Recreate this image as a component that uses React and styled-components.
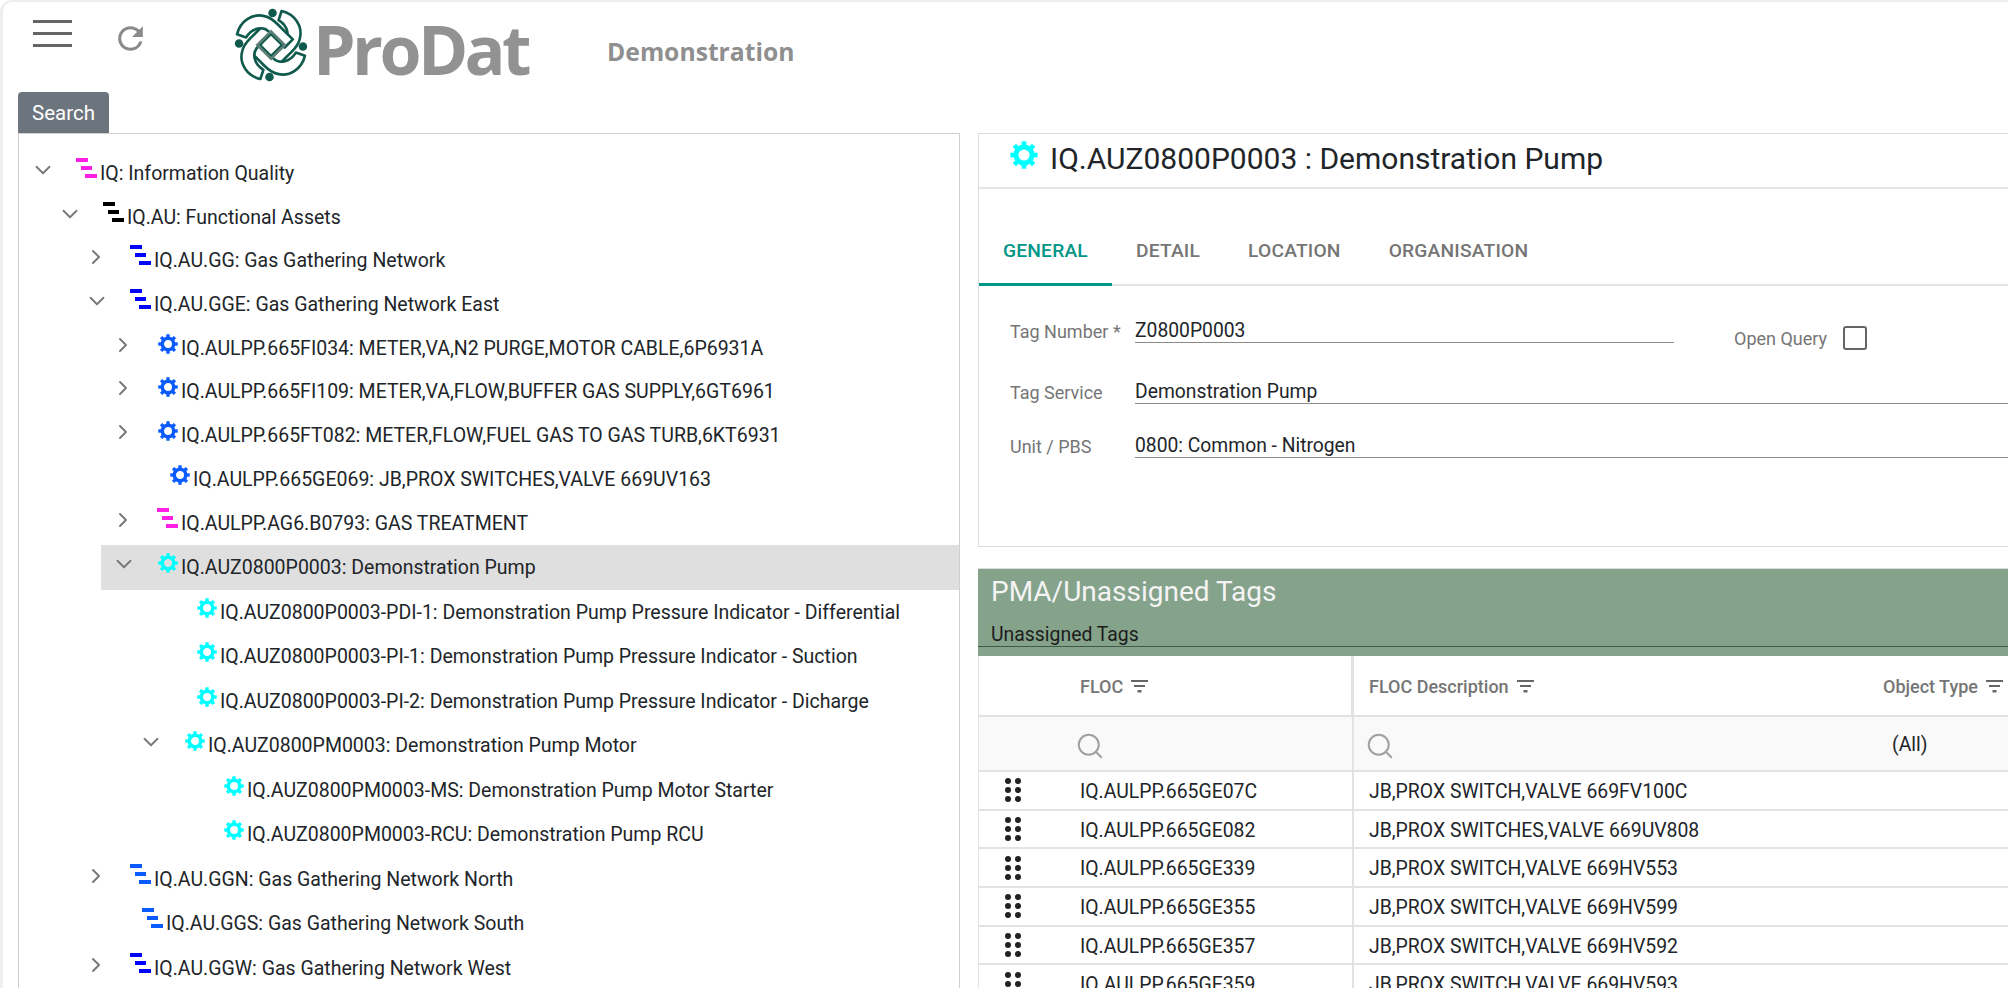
import React from "react";
import styled, { createGlobalStyle } from "styled-components";
import { MdRefresh } from "react-icons/md";
import { ChevronDown, ChevronRight, Search as SearchGlyph } from "lucide-react";

const GlobalStyle = createGlobalStyle`
  html, body {
    margin: 0;
    padding: 0;
    background: #ffffff;
  }
  * {
    box-sizing: border-box;
  }
`;

const Page = styled.div`
  width: 2008px;
  height: 988px;
  overflow: hidden;
  background: #ffffff;
  border-top: 2px solid #efefef;
  border-left: 3px solid #efefef;
  border-top-left-radius: 12px;
  font-family: Roboto, "Liberation Sans", sans-serif;
  color: #212529;
`;

// Top bar
const TopBar = styled.div`
  display: flex;
  align-items: flex-start;
  height: 90px;
`;

const Burger = styled.div`
  display: flex;
  flex-direction: column;
  gap: 9px;
  width: 39px;
  margin: 18px 0 0 30px;
`;

const BurgerLine = styled.span`
  display: block;
  height: 3px;
  background: #666;
`;

const Refresh = styled.div`
  margin: 18px 0 0 40px;
  color: #8a8a8a;
  display: flex;
`;

const LogoWrap = styled.div`
  margin: 6px 0 0 85px;
  display: flex;
`;

const Brand = styled.div`
  margin: 9px 0 0 5px;
  font-family: "Open Sans", sans-serif;
  font-weight: 700;
  font-size: 68px;
  line-height: 76px;
  color: #929292;
  letter-spacing: -3.6px;
`;

const Env = styled.div`
  margin: 32px 0 0 79px;
  font-family: "Open Sans", sans-serif;
  font-weight: 700;
  font-size: 24.7px;
  line-height: 36px;
  color: #8f8f8f;
`;

const SearchButton = styled.button`
  display: block;
  width: 91px;
  height: 41px;
  margin-left: 15px;
  border: none;
  border-radius: 4px 4px 0 0;
  background: #6c757d;
  color: #ffffff;
  font-family: Roboto, sans-serif;
  font-size: 20.5px;
  padding: 0;
`;

const Main = styled.div`
  display: grid;
  grid-template-columns: 942px 1fr;
  column-gap: 18px;
  margin-left: 15px;
`;

// Tree
const TreePanel = styled.div`
  position: relative;
  height: 860px;
  border: 1px solid #cfcfcf;
  border-bottom: none;
  padding-top: 17px;
`;

const Splitter = styled.span`
  position: absolute;
  right: -10px;
  bottom: 0;
  width: 2px;
  height: 5px;
  background: #444;
`;

const TreeRow = styled.div`
  display: flex;
  align-items: center;
  height: ${(p) => p.$height}px;
  margin-left: ${(p) => p.$level * 27 + 1}px;
  background: ${(p) => (p.$selected ? "#dfdfdf" : "transparent")};
`;

const Toggle = styled.div`
  width: 57px;
  flex: none;
  display: flex;
  padding-left: 10px;
  color: #777;
  margin-bottom: 6px;
`;

const LeafGap = styled.span`
  width: 12px;
  flex: none;
`;

const TreeText = styled.span`
  font-size: 19.5px;
  line-height: 24px;
  white-space: nowrap;
  margin-left: 3px;
  margin-top: 2px;
`;

const BarsIcon = styled.svg`
  flex: none;
  width: 21px;
  height: 20px;
  margin-bottom: 10px;
  margin-left: -1px;
`;

const GearSvg = styled.svg`
  flex: none;
  width: ${(p) => p.$size}px;
  height: ${(p) => p.$size}px;
  margin-bottom: ${(p) => p.$lift}px;
`;

const Bars = ({ color }) => (
  <BarsIcon viewBox="0 0 21 20">
    <rect x="0" y="0" width="12" height="4" fill={color} />
    <rect x="5" y="8" width="11" height="4" fill={color} />
    <rect x="9" y="16" width="12" height="4" fill={color} />
  </BarsIcon>
);

const Gear = ({ color, size = 20, lift = 8 }) => (
  <GearSvg viewBox="0 0 24 24" $size={size} $lift={lift}>
    <circle cx="12" cy="12" r="6.9" fill="none" stroke={color} strokeWidth="4.2" />
    {[0, 45, 90, 135, 180, 225, 270, 315].map((a) => (
      <rect key={a} x="10" y="0.3" width="4" height="4" fill={color} transform={`rotate(${a} 12 12)`} />
    ))}
  </GearSvg>
);

const TreeItem = ({ item, index }) => (
  <TreeRow $level={item.level} $selected={item.selected} $height={index < 8 ? 43.7 : 44.5}>
    <Toggle>
      {item.open === true && <ChevronDown size={26} strokeWidth={1.7} />}
      {item.open === false && <ChevronRight size={24} strokeWidth={1.9} />}
    </Toggle>
    {item.leaf && <LeafGap />}
    {item.bars ? <Bars color={item.bars} /> : <Gear color={item.gear} />}
    <TreeText>{item.text}</TreeText>
  </TreeRow>
);

// Detail card
const RightColumn = styled.div`
  display: flex;
  flex-direction: column;
  min-width: 0;
`;

const DetailCard = styled.div`
  height: 414px;
  border: 1px solid #dcdcdc;
  border-right: none;
`;

const DetailTitle = styled.div`
  display: flex;
  align-items: center;
  height: 55px;
  padding: 0 0 5px 31px;
  border-bottom: 2px solid #e6e6e6;
  font-size: 30px;
  color: #212529;
`;

const TitleGearSlot = styled.div`
  display: flex;
  margin-right: 12px;
`;

const Tabs = styled.div`
  display: flex;
  height: 97px;
  align-items: flex-end;
  border-bottom: 2px solid #e4e4e4;
`;

const Tab = styled.div`
  height: 97px;
  padding: 50px 24px 0;
  margin-bottom: -2px;
  font-size: 19.2px;
  font-weight: 500;
  line-height: 24px;
  letter-spacing: 0.2px;
  color: ${(p) => (p.$active ? "#009688" : "#757575")};
  border-bottom: 3px solid ${(p) => (p.$active ? "#009688" : "transparent")};
`;

const Form = styled.div`
  padding: 29px 0 0 31px;
`;

const FormRow = styled.div`
  display: flex;
  align-items: flex-start;
  height: ${(p) => p.$height}px;
`;

const FormLabel = styled.div`
  width: 125px;
  flex: none;
  font-size: 18px;
  line-height: 34px;
  color: #757575;
`;

const FormValue = styled.div`
  flex: ${(p) => (p.$short ? "none" : "1")};
  width: ${(p) => (p.$short ? "539px" : "auto")};
  height: 28px;
  font-size: 19.3px;
  line-height: 32px;
  color: #212529;
  border-bottom: 1.5px solid #8a8a8a;
`;

const QueryBox = styled.div`
  display: flex;
  align-items: center;
  gap: 16px;
  margin: 11px 0 0 60px;
  font-size: 18px;
  color: #757575;
`;

const Check = styled.span`
  display: block;
  width: 24px;
  height: 24px;
  border: 2.5px solid #666;
  border-radius: 3px;
  background: #fff;
`;

// Unassigned grid
const GridPanel = styled.div`
  margin-top: 21px;
  border-top: 1px solid #dcdcdc;
`;

const GridBanner = styled.div`
  height: 87px;
  background: #85a28b;
  padding: 7px 0 0 13px;
`;

const BannerTitle = styled.div`
  font-size: 28px;
  line-height: 32px;
  color: #f4f4f4;
`;

const BannerSub = styled.div`
  font-size: 19.4px;
  line-height: 24px;
  color: #1c1c1c;
  margin: 15px 0 0 -13px;
  padding: 0 0 0 13px;
  height: 24px;
  border-bottom: 1.5px solid #3f5a45;
`;

const Row = styled.div`
  display: grid;
  grid-template-columns: 375px 1fr;
  height: ${(p) => p.$height}px;
  border-bottom: 2px solid #e2e2e2;
  border-left: 1px solid #e2e2e2;
  background: ${(p) => p.$bg || "#ffffff"};
`;

const FirstCell = styled.div`
  display: flex;
  align-items: center;
  padding-left: ${(p) => p.$pad}px;
  border-right: ${(p) => p.$line}px solid #e2e2e2;
  min-width: 0;
`;

const SecondCell = styled.div`
  display: flex;
  align-items: center;
  padding-left: 15px;
  min-width: 0;
`;

const HeadText = styled.span`
  font-size: 18px;
  font-weight: 500;
  color: #757575;
  white-space: nowrap;
  margin-top: 2px;
`;

const Spread = styled.div`
  flex: 1;
`;

const ObjectType = styled.div`
  display: flex;
  align-items: center;
  width: 125px;
  flex: none;
`;

const CellText = styled.span`
  font-size: 19.4px;
  color: #212529;
  white-space: nowrap;
  margin-top: 2px;
`;

const AllText = styled.span`
  font-size: 19.4px;
  color: #212529;
  margin: 2px 0 0 9px;
`;

const FilterSvg = styled.svg`
  width: 17px;
  height: 14px;
  margin-left: 8px;
  flex: none;
`;

const Handle = styled.div`
  display: grid;
  grid-template-columns: 6px 6px;
  gap: 3px 4px;
  width: 16px;
  margin-right: 59px;
`;

const Dot = styled.span`
  width: 6px;
  height: 6px;
  border-radius: 50%;
  background: #222;
`;

const SearchIcon = styled.div`
  display: flex;
  color: #a0a0a0;
  margin: 5px 0 0 -4px;
`;

const FilterIcon = () => (
  <FilterSvg viewBox="0 0 17 14">
    <rect x="0" y="1" width="17" height="2" fill="#666" />
    <rect x="3" y="6" width="11" height="2" fill="#666" />
    <rect x="6.5" y="11" width="4" height="2.5" fill="#666" />
  </FilterSvg>
);

const Logo = () => {
  const band = "M47 3 C60 6 68 18 65 30 C64 35 61 39 57 43 L42 58 L34 50 L50 34 C55 29 54 18 44 12 Z";
  const turns = [0, 90, 180, 270];
  return (
    <svg width="74" height="74" viewBox="0 0 73 73">
      {turns.map((a) => (
        <path
          key={a}
          d={band}
          transform={`rotate(${a} 36.5 36.5)`}
          fill="#ffffff"
          stroke="#0f5a4c"
          strokeWidth="2.6"
          strokeLinejoin="round"
        />
      ))}
      <path d="M36.5 23 L50 36.5 L36.5 50 L23 36.5 Z" fill="none" stroke="#5d7f78" strokeWidth="2.6" />
      {turns.map((a) => (
        <circle key={a} cx="38" cy="5" r="4.2" fill="#0f5a4c" transform={`rotate(${a} 36.5 36.5)`} />
      ))}
    </svg>
  );
};

const treeItems = [
  { level: 0, open: true, bars: "#ff1fe4", text: "IQ: Information Quality" },
  { level: 1, open: true, bars: "#000000", text: "IQ.AU: Functional Assets" },
  { level: 2, open: false, bars: "#0000ff", text: "IQ.AU.GG: Gas Gathering Network" },
  { level: 2, open: true, bars: "#0000ff", text: "IQ.AU.GGE: Gas Gathering Network East" },
  { level: 3, open: false, gear: "#0a5cff", text: "IQ.AULPP.665FI034: METER,VA,N2 PURGE,MOTOR CABLE,6P6931A" },
  { level: 3, open: false, gear: "#0a5cff", text: "IQ.AULPP.665FI109: METER,VA,FLOW,BUFFER GAS SUPPLY,6GT6961" },
  { level: 3, open: false, gear: "#0a5cff", text: "IQ.AULPP.665FT082: METER,FLOW,FUEL GAS TO GAS TURB,6KT6931" },
  { level: 3, leaf: true, gear: "#0a5cff", text: "IQ.AULPP.665GE069: JB,PROX SWITCHES,VALVE 669UV163" },
  { level: 3, open: false, bars: "#ff1fe4", text: "IQ.AULPP.AG6.B0793: GAS TREATMENT" },
  { level: 3, open: true, gear: "#00ffff", selected: true, text: "IQ.AUZ0800P0003: Demonstration Pump" },
  { level: 4, leaf: true, gear: "#00ffff", text: "IQ.AUZ0800P0003-PDI-1: Demonstration Pump Pressure Indicator - Differential" },
  { level: 4, leaf: true, gear: "#00ffff", text: "IQ.AUZ0800P0003-PI-1: Demonstration Pump Pressure Indicator - Suction" },
  { level: 4, leaf: true, gear: "#00ffff", text: "IQ.AUZ0800P0003-PI-2: Demonstration Pump Pressure Indicator - Dicharge" },
  { level: 4, open: true, gear: "#00ffff", text: "IQ.AUZ0800PM0003: Demonstration Pump Motor" },
  { level: 5, leaf: true, gear: "#00ffff", text: "IQ.AUZ0800PM0003-MS: Demonstration Pump Motor Starter" },
  { level: 5, leaf: true, gear: "#00ffff", text: "IQ.AUZ0800PM0003-RCU: Demonstration Pump RCU" },
  { level: 2, open: false, bars: "#0a5cff", text: "IQ.AU.GGN: Gas Gathering Network North" },
  { level: 2, leaf: true, bars: "#0a5cff", text: "IQ.AU.GGS: Gas Gathering Network South" },
  { level: 2, open: false, bars: "#0000ff", text: "IQ.AU.GGW: Gas Gathering Network West" },
];

const gridRows = [
  ["IQ.AULPP.665GE07C", "JB,PROX SWITCH,VALVE 669FV100C"],
  ["IQ.AULPP.665GE082", "JB,PROX SWITCHES,VALVE 669UV808"],
  ["IQ.AULPP.665GE339", "JB,PROX SWITCH,VALVE 669HV553"],
  ["IQ.AULPP.665GE355", "JB,PROX SWITCH,VALVE 669HV599"],
  ["IQ.AULPP.665GE357", "JB,PROX SWITCH,VALVE 669HV592"],
  ["IQ.AULPP.665GE359", "JB,PROX SWITCH,VALVE 669HV593"],
];

const App = () => (
  <Page>
    <GlobalStyle />
    <TopBar>
      <Burger>
        <BurgerLine />
        <BurgerLine />
        <BurgerLine />
      </Burger>
      <Refresh>
        <MdRefresh size={37} />
      </Refresh>
      <LogoWrap>
        <Logo />
      </LogoWrap>
      <Brand>ProDat</Brand>
      <Env>Demonstration</Env>
    </TopBar>
    <SearchButton>Search</SearchButton>
    <Main>
      <TreePanel>
        {treeItems.map((item, i) => (
          <TreeItem key={item.text} item={item} index={i} />
        ))}
        <Splitter />
      </TreePanel>
      <RightColumn>
        <DetailCard>
          <DetailTitle>
            <TitleGearSlot>
              <Gear color="#00ffff" size={28} lift={6} />
            </TitleGearSlot>
            IQ.AUZ0800P0003 : Demonstration Pump
          </DetailTitle>
          <Tabs>
            <Tab $active>GENERAL</Tab>
            <Tab>DETAIL</Tab>
            <Tab>LOCATION</Tab>
            <Tab>ORGANISATION</Tab>
          </Tabs>
          <Form>
            <FormRow $height={61}>
              <FormLabel>Tag Number *</FormLabel>
              <FormValue $short>Z0800P0003</FormValue>
              <QueryBox>
                Open Query
                <Check />
              </QueryBox>
            </FormRow>
            <FormRow $height={54}>
              <FormLabel>Tag Service</FormLabel>
              <FormValue>Demonstration Pump</FormValue>
            </FormRow>
            <FormRow $height={54}>
              <FormLabel>Unit / PBS</FormLabel>
              <FormValue>0800: Common - Nitrogen</FormValue>
            </FormRow>
          </Form>
        </DetailCard>
        <GridPanel>
          <GridBanner>
            <BannerTitle>PMA/Unassigned Tags</BannerTitle>
            <BannerSub>Unassigned Tags</BannerSub>
          </GridBanner>
          <Row $height={61}>
            <FirstCell $pad={101} $line={3}>
              <HeadText>FLOC</HeadText>
              <FilterIcon />
            </FirstCell>
            <SecondCell>
              <HeadText>FLOC Description</HeadText>
              <FilterIcon />
              <Spread />
              <ObjectType>
                <HeadText>Object Type</HeadText>
                <FilterIcon />
              </ObjectType>
            </SecondCell>
          </Row>
          <Row $height={55} $bg="#f9f9f9">
            <FirstCell $pad={100} $line={2}>
              <SearchIcon>
                <SearchGlyph size={30} strokeWidth={1.6} />
              </SearchIcon>
            </FirstCell>
            <SecondCell>
              <SearchIcon>
                <SearchGlyph size={30} strokeWidth={1.6} />
              </SearchIcon>
              <Spread />
              <ObjectType>
                <AllText>(All)</AllText>
              </ObjectType>
            </SecondCell>
          </Row>
          {gridRows.map(([floc, desc]) => (
            <Row key={floc} $height={38.7}>
              <FirstCell $pad={26} $line={2}>
                <Handle>
                  {[0, 1, 2, 3, 4, 5].map((d) => (
                    <Dot key={d} />
                  ))}
                </Handle>
                <CellText>{floc}</CellText>
              </FirstCell>
              <SecondCell>
                <CellText>{desc}</CellText>
              </SecondCell>
            </Row>
          ))}
        </GridPanel>
      </RightColumn>
    </Main>
  </Page>
);

export default App;
